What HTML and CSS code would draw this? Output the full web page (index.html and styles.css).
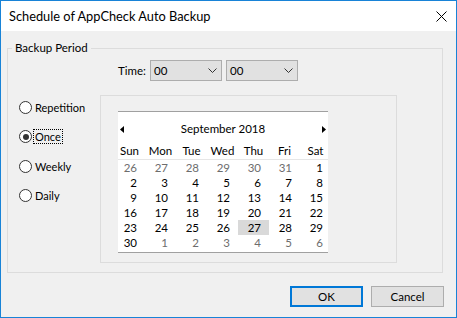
FILE: index.html
```html
<!DOCTYPE html>
<html lang="en">
<head>
    <meta charset="UTF-8">
    <meta name="viewport" content="width=device-width, initial-scale=1.0">
    <title>Schedule of AppCheck Auto Backup</title>
    <link rel="stylesheet" href="styles.css">
</head>
<body>
    <div class="window">
        <div class="titlebar">
            <span class="title">Schedule of AppCheck Auto Backup</span>
            <svg class="close" width="11" height="11" viewBox="0 0 11 11">
                <path d="M0.5 0.5 L10.5 10.5 M10.5 0.5 L0.5 10.5" stroke="#000" stroke-width="1" fill="none"/>
            </svg>
        </div>

        <div class="content">
            <fieldset class="group">
                <legend>Backup Period</legend>

                <div class="time-row">
                    <span class="time-label">Time:</span>
                    <div class="combo">
                        <span>00</span>
                        <svg width="9" height="5" viewBox="0 0 9 5"><path d="M0.5 0.5 L4.5 4.5 L8.5 0.5" stroke="#333" fill="none"/></svg>
                    </div>
                    <div class="combo">
                        <span>00</span>
                        <svg width="9" height="5" viewBox="0 0 9 5"><path d="M0.5 0.5 L4.5 4.5 L8.5 0.5" stroke="#333" fill="none"/></svg>
                    </div>
                </div>

                <div class="period">
                    <div class="radios">
                        <div class="radio"><span class="circle"></span><span class="radio-text">Repetition</span></div>
                        <div class="radio checked"><span class="circle"></span><span class="radio-text focus">Once</span></div>
                        <div class="radio"><span class="circle"></span><span class="radio-text">Weekly</span></div>
                        <div class="radio"><span class="circle"></span><span class="radio-text">Daily</span></div>
                    </div>

                    <div class="panel">
                        <div class="calendar">
                            <div class="cal-title">
                                <svg width="4" height="7" viewBox="0 0 4 7"><path d="M4 0 L0 3.5 L4 7 Z" fill="#000"/></svg>
                                <span>September 2018</span>
                                <svg width="4" height="7" viewBox="0 0 4 7"><path d="M0 0 L4 3.5 L0 7 Z" fill="#000"/></svg>
                            </div>
                            <div class="cal-week">
                                <div class="cal-grid">
                                    <span>Sun</span><span>Mon</span><span>Tue</span><span>Wed</span><span>Thu</span><span>Fri</span><span>Sat</span>
                                </div>
                            </div>
                            <div class="cal-grid cal-days">
                                <span class="other">26</span><span class="other">27</span><span class="other">28</span><span class="other">29</span><span class="other">30</span><span class="other">31</span><span>1</span>
                                <span>2</span><span>3</span><span>4</span><span>5</span><span>6</span><span>7</span><span>8</span>
                                <span>9</span><span>10</span><span>11</span><span>12</span><span>13</span><span>14</span><span>15</span>
                                <span>16</span><span>17</span><span>18</span><span>19</span><span>20</span><span>21</span><span>22</span>
                                <span>23</span><span>24</span><span>25</span><span>26</span><span class="selected">27</span><span>28</span><span>29</span>
                                <span>30</span><span class="other">1</span><span class="other">2</span><span class="other">3</span><span class="other">4</span><span class="other">5</span><span class="other">6</span>
                            </div>
                        </div>
                    </div>
                </div>
            </fieldset>

            <div class="buttons">
                <button class="btn default">OK</button>
                <button class="btn">Cancel</button>
            </div>
        </div>
    </div>
</body>
</html>
```

FILE: styles.css
```css
* {
    margin: 0;
    padding: 0;
    box-sizing: border-box;
}

body {
    font-family: Lato, "Noto Sans", sans-serif;
    font-size: 11.5px;
    color: #000;
    background: #fff;
}

.window {
    width: 457px;
    height: 318px;
    border: 1px solid #1883d7;
    display: flex;
    flex-direction: column;
}

.titlebar {
    height: 30px;
    background: #fff;
    display: flex;
    align-items: center;
    justify-content: space-between;
    padding: 0 9px 0 8px;
}

.title {
    font-size: 12.8px;
    line-height: 16px;
}

.content {
    flex: 1;
    background: #f0f0f0;
    padding: 9px 12px 0 6px;
}

.group {
    width: 436px;
    border: 1px solid #dcdcdc;
    padding: 4px 0 9px 0;
}

.group legend {
    margin-left: 4px;
    padding: 0 3px;
    line-height: 16px;
}

.time-row {
    display: flex;
    align-items: center;
    gap: 4px;
    height: 21px;
    padding-left: 110px;
}

.time-label {
    width: 28px;
}

.combo {
    width: 72px;
    height: 21px;
    background: #e1e1e1;
    border: 1px solid #adadad;
    display: flex;
    align-items: center;
    justify-content: space-between;
    padding: 0 4px 0 3px;
}

.period {
    display: flex;
    margin-top: 14px;
}

.radios {
    width: 92px;
    padding: 4px 0 0 11px;
    display: flex;
    flex-direction: column;
    gap: 13.5px;
}

.radio {
    height: 16px;
    display: flex;
    align-items: center;
    gap: 1px;
}

.circle {
    width: 13px;
    height: 13px;
    border: 1px solid #333;
    border-radius: 50%;
    background: #fff;
    display: flex;
    align-items: center;
    justify-content: center;
}

.radio.checked .circle::after {
    content: "";
    width: 6px;
    height: 6px;
    border-radius: 50%;
    background: #333;
}

.radio-text {
    font-size: 11px;
    line-height: 13px;
    padding: 0 1px;
    border: 1px dotted transparent;
}

.radio-text.focus {
    border-color: #000;
}

.panel {
    width: 297px;
    height: 168px;
    border: 1px solid #dcdcdc;
    padding: 15px 0 0 17px;
}

.calendar {
    width: 210px;
    background: #fff;
    border-top: 1px solid #a0a0a0;
    border-bottom: 1px solid #a0a0a0;
    padding-bottom: 2px;
}

.cal-title {
    height: 31px;
    padding: 3px 2px 0;
    display: flex;
    align-items: center;
    justify-content: space-between;
    line-height: 16px;
}

.cal-week {
    border-bottom: 1px solid #e6e6e6;
}

.cal-grid {
    display: grid;
    grid-template-columns: repeat(7, 31px);
    width: 217px;
    margin-left: -4px;
    line-height: 16px;
    text-align: center;
}

.cal-days {
    grid-auto-rows: 15px;
    line-height: 15px;
    text-align: right;
}

.cal-days span {
    padding-right: 8px;
}

.cal-days .other {
    color: #6d6d6d;
}

.cal-days .selected {
    background: #d9d9d9;
}

.buttons {
    display: flex;
    justify-content: flex-end;
    gap: 8px;
    margin-top: 13px;
}

.btn {
    width: 73px;
    height: 21px;
    font-family: inherit;
    font-size: 11.5px;
    color: #000;
    background: #e1e1e1;
    border: 1px solid #adadad;
}

.btn.default {
    border: 2px solid #0078d7;
}
```
